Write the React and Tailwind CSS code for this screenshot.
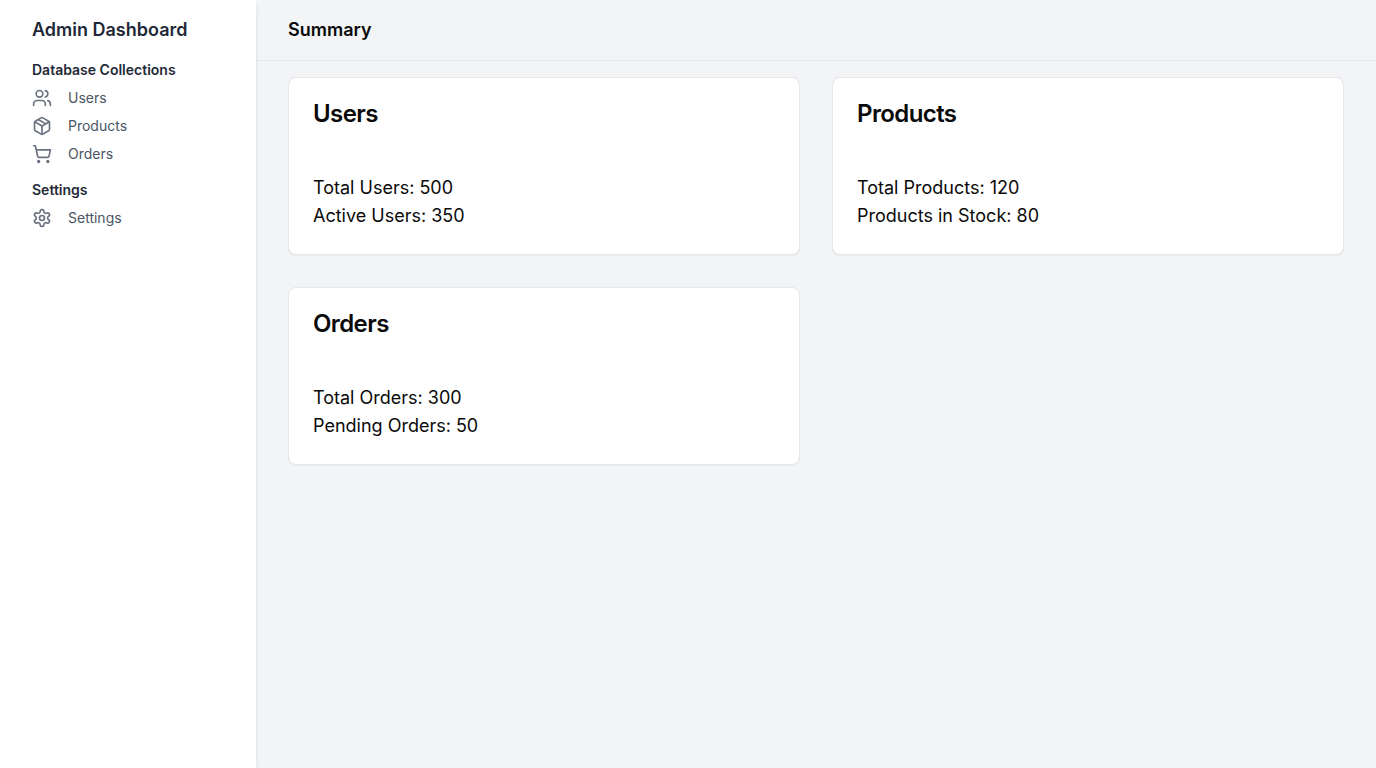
import { Users, Package, ShoppingCart } from "lucide-react";

function GearIcon({ className }) {
  return (
    <svg
      viewBox="0 0 24 24"
      fill="none"
      stroke="currentColor"
      strokeWidth="2"
      strokeLinecap="round"
      strokeLinejoin="round"
      aria-hidden="true"
      className={className}
    >
      <path d="M12.22 2h-.44a2 2 0 0 0-2 2v.18a2 2 0 0 1-1 1.73l-.43.25a2 2 0 0 1-2 0l-.15-.08a2 2 0 0 0-2.73.73l-.22.38a2 2 0 0 0 .73 2.73l.15.1a2 2 0 0 1 1 1.72v.51a2 2 0 0 1-1 1.74l-.15.09a2 2 0 0 0-.73 2.73l.22.38a2 2 0 0 0 2.73.73l.15-.08a2 2 0 0 1 2 0l.43.25a2 2 0 0 1 1 1.73V20a2 2 0 0 0 2 2h.44a2 2 0 0 0 2-2v-.18a2 2 0 0 1 1-1.73l.43-.25a2 2 0 0 1 2 0l.15.08a2 2 0 0 0 2.73-.73l.22-.39a2 2 0 0 0-.73-2.73l-.15-.08a2 2 0 0 1-1-1.74v-.5a2 2 0 0 1 1-1.74l.15-.09a2 2 0 0 0 .73-2.73l-.22-.38a2 2 0 0 0-2.73-.73l-.15.08a2 2 0 0 1-2 0l-.43-.25a2 2 0 0 1-1-1.73V4a2 2 0 0 0-2-2z" />
      <circle cx="12" cy="12" r="3" />
    </svg>
  );
}

const groups = [
  {
    title: "Database Collections",
    items: [
      { label: "Users", icon: Users },
      { label: "Products", icon: Package },
      { label: "Orders", icon: ShoppingCart },
    ],
  },
  { title: "Settings", items: [{ label: "Settings", icon: GearIcon }] },
];

const cards = [
  { title: "Users", lines: ["Total Users: 500", "Active Users: 350"] },
  { title: "Products", lines: ["Total Products: 120", "Products in Stock: 80"] },
  { title: "Orders", lines: ["Total Orders: 300", "Pending Orders: 50"] },
];

function Sidebar() {
  return (
    <aside className="z-10 w-64 shrink-0 bg-white shadow-md">
      <div className="flex h-15 items-center px-8">
        <h1 className="text-lg font-semibold text-[#1f2937]">Admin Dashboard</h1>
      </div>
      <nav className="flex flex-col gap-4 px-8">
        {groups.map((group) => (
          <div key={group.title}>
            <h2 className="text-sm font-semibold text-[#1f2937]">{group.title}</h2>
            <ul className="mt-2 flex flex-col gap-2">
              {group.items.map(({ label, icon: Icon }) => (
                <li key={label}>
                  <a href="#" className="flex items-center gap-4 text-sm text-[#4b5563]">
                    <Icon className="size-5 text-[#6b7280]" />
                    {label}
                  </a>
                </li>
              ))}
            </ul>
          </div>
        ))}
      </nav>
    </aside>
  );
}

function Card({ title, lines }) {
  return (
    <section className="rounded-lg border border-[#e5e7eb] bg-white p-6 shadow-xs">
      <h3 className="text-2xl leading-6 font-semibold tracking-tight">{title}</h3>
      <div className="pt-12 text-lg">
        {lines.map((line) => (
          <p key={line}>{line}</p>
        ))}
      </div>
    </section>
  );
}

export default function App() {
  return (
    <div className="flex min-h-screen bg-[#f3f4f6] font-[Inter,sans-serif] text-neutral-950">
      <Sidebar />
      <main className="flex-1">
        <header className="border-b border-[#e5e7eb] px-8 py-4">
          <h2 className="text-lg font-semibold">Summary</h2>
        </header>
        <div className="grid grid-cols-2 gap-8 px-8 py-4">
          {cards.map((card) => (
            <Card key={card.title} {...card} />
          ))}
        </div>
      </main>
    </div>
  );
}
